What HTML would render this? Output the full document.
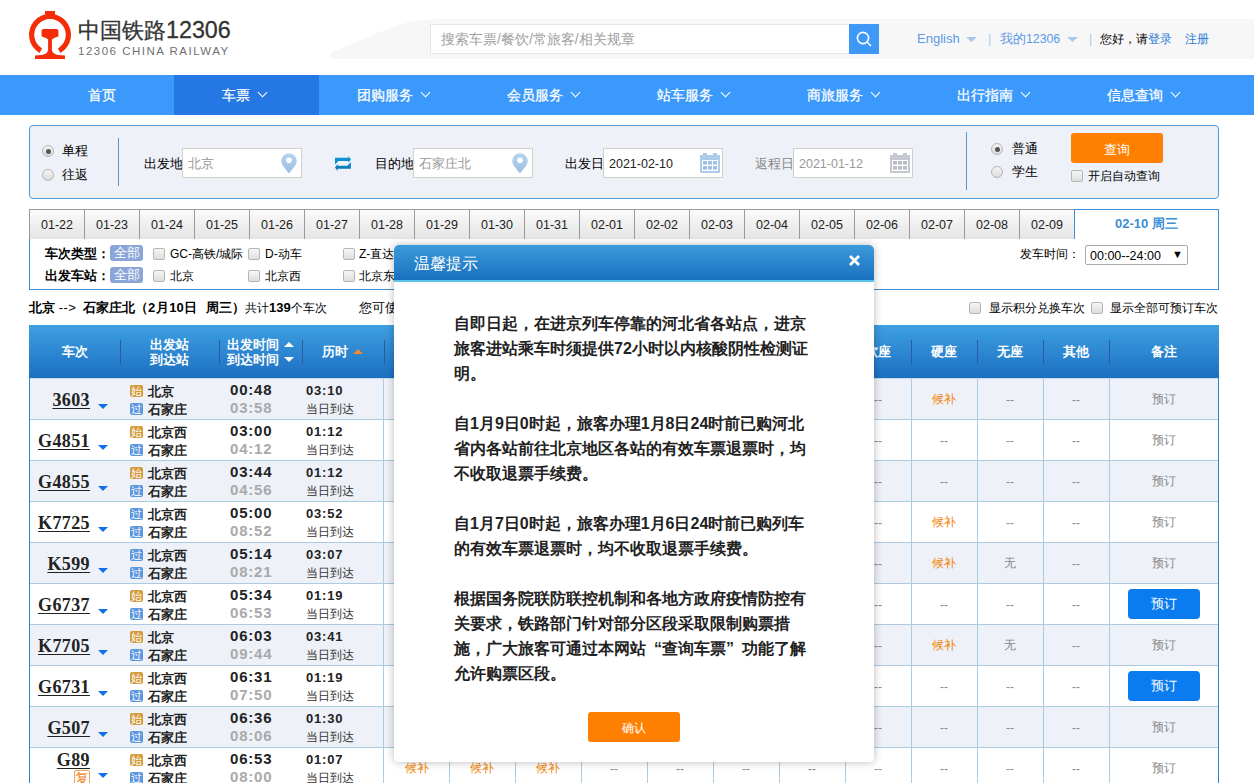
<!DOCTYPE html>
<html><head><meta charset="utf-8">
<style>
*{margin:0;padding:0;box-sizing:border-box}
html,body{width:1254px;height:783px;overflow:hidden;background:#fff}
body{font-family:"Liberation Sans",sans-serif;font-size:12px;color:#333;position:relative}
.a{position:absolute;white-space:nowrap}
/* header */
.nav{position:absolute;left:0;top:75px;width:1254px;height:40px;background:#3c99fc}
.nav .it{position:absolute;top:0;height:40px;line-height:40px;color:#fff;font-size:14px;text-align:center;-webkit-text-stroke:0.25px #fff}
.nav .act{background:#2577e3}
.chev{display:inline-block;width:7px;height:7px;border-right:1.6px solid #fff;border-bottom:1.6px solid #fff;transform:rotate(45deg);margin-left:9px;position:relative;top:-4px}
.inp{position:absolute;background:#fff;border:1px solid #d3d0c9;height:30px;top:148px}
.lbl{position:absolute;top:156px;font-size:13px;color:#000;line-height:16px}
.radio{position:absolute;width:12px;height:12px;border-radius:50%;border:1px solid #b5b5b5;background:linear-gradient(#f4f4f4,#dcdcdc)}
.radio.on::after{content:"";position:absolute;left:2.5px;top:2.5px;width:5px;height:5px;border-radius:50%;background:#555}
.cb{position:absolute;width:12px;height:12px;border-radius:2px;border:1px solid #b5b5b5;background:linear-gradient(#f6f6f6,#dedede)}
.tab{position:absolute;top:209px;width:56px;height:30px;border:1px solid #9a9a9a;border-bottom:none;background:linear-gradient(#fbfbfb,#e4e4e4);font-size:12.5px;color:#222;text-align:center;line-height:31px}
.flt{position:absolute;font-size:12px;line-height:16px;color:#000;white-space:nowrap}
.badge{position:absolute;width:33px;height:16px;border-radius:3px;background:#8aa5d8;color:#fff;font-size:13px;line-height:16px;text-align:center}
.thead{background:linear-gradient(#3ea0e1,#1c6fc1)}
.hsep{top:340px;width:1px;height:24px;background:#2d5a9e}
.th{color:#fff;font-weight:bold;font-size:13px;line-height:16px;text-align:center}
.vsep{width:1px;height:41px;background:#accbe1}
.tn{font-family:"Liberation Serif",serif;font-weight:bold;font-size:18px;line-height:22px;color:#222;text-decoration:underline;text-underline-offset:2px;letter-spacing:0.4px}
.tri{width:0;height:0;border-left:5px solid transparent;border-right:5px solid transparent;border-top:5px solid #1270e6}
.ico{width:13px;height:12px;border-radius:2px;color:#fff;font-size:11px;line-height:12px;text-align:center}
.ico.s{background:#d39a3e}.ico.g{background:#5b96e0}
.stn{font-size:13px;font-weight:bold;color:#222;line-height:16px}
.tm{font-size:15px;font-weight:bold;color:#222;line-height:18px;letter-spacing:0.8px}
.du{font-size:13px;font-weight:bold;color:#222;line-height:16px;letter-spacing:0.8px}
.dd{font-size:12px;color:#333;line-height:16px}
.seat{font-size:12px;line-height:16px;text-align:center}
.btnb{width:72px;height:30px;border-radius:4px;background:#0b7cf0;color:#fff;font-size:13px;line-height:30px;text-align:center}
.modal{position:absolute;left:394px;top:245px;width:480px;height:517px;background:#fff;border-radius:5px 5px 4px 4px;box-shadow:0 0 8px rgba(0,0,0,0.28)}
.mh{position:absolute;left:0;top:0;width:480px;height:37px;border-radius:5px 5px 0 0;background:linear-gradient(#3b9bda,#1a70bf);border-bottom:2px solid #5cc3ec}
.mt{position:absolute;left:60px;top:66px;font-size:16px;font-weight:bold;line-height:25px;color:#222;white-space:nowrap}
</style></head><body>

<!-- HEADER -->
<svg class="a" style="left:0;top:0" width="1254" height="75">
  <path d="M1254 19 L440 19 Q410 19 385 30 L334 51 Q326 56 333 59 L1254 59 Z" fill="#f7f7f7"/>
  <!-- logo -->
  <g fill="#f42c08">
    <path d="M39.5 52.99 A21 21 0 1 1 60.5 52.99 L57.9 48.48 A15.8 15.8 0 1 0 42.1 48.48 Z"/>
    <rect x="45" y="11" width="10" height="5"/>
    <path d="M43.5 29 H56.5 Q58.4 29 58.4 31 V36.5 Q54 37.5 51.9 39.5 V50 Q52.5 54 58 55 L65 55.6 V59 H35 V55.6 L42 55 Q47.5 54 48.1 50 V39.5 Q46 37.5 41.6 36.5 V31 Q41.6 29 43.5 29 Z"/>
  </g>
</svg>
<div class="a" style="left:78px;top:16px;font-size:21.5px;color:#333;line-height:28px;-webkit-text-stroke:0.3px #333">中国铁路<span style="font-size:23.3px">12306</span></div>
<div class="a" style="left:78px;top:44px;font-size:11.5px;color:#707070;letter-spacing:1.5px;line-height:14px">12306 CHINA RAILWAY</div>

<div class="a" style="left:430px;top:24px;width:420px;height:30px;background:#fff;border:1px solid #e6e6e6"></div>
<div class="a" style="left:441px;top:30px;font-size:14px;color:#a0a0a0;line-height:18px">搜索车票/餐饮/常旅客/相关规章</div>
<div class="a" style="left:849px;top:24px;width:30px;height:30px;background:#3d98f7"></div>
<svg class="a" style="left:849px;top:24px" width="30" height="30"><circle cx="14" cy="14" r="5.6" fill="none" stroke="#fff" stroke-width="1.6"/><line x1="18" y1="18" x2="22" y2="22" stroke="#fff" stroke-width="1.6"/></svg>

<div class="a" style="left:917px;top:31px;font-size:13px;color:#5a9ae6;line-height:16px">English</div>
<div class="a" style="left:988px;top:31px;font-size:12px;color:#a8c8ee;line-height:16px">|</div>
<div class="a" style="left:1000px;top:31px;font-size:12.5px;color:#5a9ae6;line-height:16px">我的<span style="font-size:12.3px">12306</span></div>
<div class="a" style="left:1089px;top:31px;font-size:12px;color:#a8c8ee;line-height:16px">|</div>
<div class="a" style="left:1100px;top:31px;font-size:12px;color:#000;line-height:16px">您好，请<span style="color:#2a7bd6">登录</span></div>
<div class="a" style="left:1185px;top:31px;font-size:12px;color:#2a7bd6;line-height:16px">注册</div>
<svg class="a" style="left:0;top:0" width="1254" height="75"><path d="M966 37 h11 l-5.5 5z M1067 37 h11 l-5.5 5z" fill="#a8c8ee"/></svg>

<!-- NAV -->
<div class="nav">
  <div class="it" style="left:29px;width:145px">首页</div>
  <div class="it act" style="left:174px;width:145px;text-indent:-5px">车票<i class="chev"></i></div>
  <div class="it" style="left:319px;width:150px;text-indent:-3px">团购服务<i class="chev"></i></div>
  <div class="it" style="left:469px;width:150px;text-indent:-3px">会员服务<i class="chev"></i></div>
  <div class="it" style="left:619px;width:150px;text-indent:-3px">站车服务<i class="chev"></i></div>
  <div class="it" style="left:769px;width:150px;text-indent:-3px">商旅服务<i class="chev"></i></div>
  <div class="it" style="left:919px;width:150px;text-indent:-3px">出行指南<i class="chev"></i></div>
  <div class="it" style="left:1069px;width:150px;text-indent:-3px">信息查询<i class="chev"></i></div>
</div>

<!-- SEARCH FORM -->
<div class="a" style="left:29px;top:125px;width:1190px;height:74px;border:1px solid #4e9bd8;border-radius:4px;background:#eef1f8"></div>
<div class="radio on" style="left:42px;top:145px"></div>
<div class="radio" style="left:42px;top:169px"></div>
<div class="lbl" style="left:62px;top:143px">单程</div>
<div class="lbl" style="left:62px;top:167px">往返</div>
<div class="a" style="left:118px;top:138px;width:1px;height:48px;background:#4e9bd8"></div>

<div class="lbl" style="left:144px;font-size:12.5px">出发地</div>
<div class="inp" style="left:182px;width:120px"></div>
<div class="lbl" style="left:188px;color:#999">北京</div>
<div class="lbl" style="left:375px;font-size:12.5px">目的地</div>
<div class="inp" style="left:413px;width:120px"></div>
<div class="lbl" style="left:419px;color:#999">石家庄北</div>
<div class="lbl" style="left:565px;font-size:12.5px">出发日</div>
<div class="inp" style="left:603px;width:120px"></div>
<div class="lbl" style="left:609px;color:#222;font-size:12.5px">2021-02-10</div>
<div class="lbl" style="left:755px;color:#888;font-size:12.5px">返程日</div>
<div class="inp" style="left:793px;width:120px"></div>
<div class="lbl" style="left:799px;color:#999;font-size:12.5px">2021-01-12</div>

<svg class="a" style="left:281px;top:153px" width="16" height="21" viewBox="0 0 16 21">
<defs><linearGradient id="pg281" x1="0" y1="0" x2="0" y2="1"><stop offset="0" stop-color="#b7d5f0"/><stop offset="1" stop-color="#9bbde2"/></linearGradient></defs>
<path d="M8 20.5 C5 16 0.3 12.5 0.3 7.9 A7.7 7.7 0 0 1 15.7 7.9 C15.7 12.5 11 16 8 20.5 Z" fill="url(#pg281)"/><circle cx="8" cy="7.3" r="2.8" fill="#fff"/></svg><svg class="a" style="left:512px;top:153px" width="16" height="21" viewBox="0 0 16 21">
<defs><linearGradient id="pg512" x1="0" y1="0" x2="0" y2="1"><stop offset="0" stop-color="#b7d5f0"/><stop offset="1" stop-color="#9bbde2"/></linearGradient></defs>
<path d="M8 20.5 C5 16 0.3 12.5 0.3 7.9 A7.7 7.7 0 0 1 15.7 7.9 C15.7 12.5 11 16 8 20.5 Z" fill="url(#pg512)"/><circle cx="8" cy="7.3" r="2.8" fill="#fff"/></svg><svg class="a" style="left:700px;top:153px" width="20" height="20" viewBox="0 0 20 20">
<rect x="3" y="0" width="4" height="3" fill="#abcdeb"/><rect x="13" y="0" width="4" height="3" fill="#abcdeb"/>
<rect x="0" y="2" width="20" height="18" fill="#abcdeb"/><rect x="2" y="7" width="16" height="11" fill="#fff"/>
<g fill="#9ec0e2"><rect x="3" y="8" width="4" height="3.6"/><rect x="8" y="8" width="4" height="3.6"/><rect x="13" y="8" width="4" height="3.6"/>
<rect x="3" y="13" width="4" height="3.6"/><rect x="8" y="13" width="4" height="3.6"/><rect x="13" y="13" width="4" height="3.6"/></g></svg><svg class="a" style="left:890px;top:153px" width="20" height="20" viewBox="0 0 20 20">
<rect x="3" y="0" width="4" height="3" fill="#c4c8d0"/><rect x="13" y="0" width="4" height="3" fill="#c4c8d0"/>
<rect x="0" y="2" width="20" height="18" fill="#c4c8d0"/><rect x="2" y="7" width="16" height="11" fill="#fff"/>
<g fill="#b9bdc6"><rect x="3" y="8" width="4" height="3.6"/><rect x="8" y="8" width="4" height="3.6"/><rect x="13" y="8" width="4" height="3.6"/>
<rect x="3" y="13" width="4" height="3.6"/><rect x="8" y="13" width="4" height="3.6"/><rect x="13" y="13" width="4" height="3.6"/></g></svg>
<svg class="a" style="left:328px;top:150px" width="30" height="28" viewBox="0 0 30 28">
<defs><linearGradient id="sw" x1="0" y1="0" x2="0" y2="1"><stop offset="0" stop-color="#0e9bd9"/><stop offset="1" stop-color="#0877b0"/></linearGradient></defs>
<path d="M7 14.4 V7.7 H20.4 V5.9 L23 9.4 L20.4 12.6 V10.9 H10.2 V11.3 Z M22.9 12.2 V18.8 H9.6 V20.9 L7 17.5 L9.6 14.1 V15.7 H19.8 V15.3 Z" fill="url(#sw)"/></svg>
<div class="a" style="left:966px;top:132px;width:1px;height:58px;background:#4e9bd8"></div>
<div class="radio on" style="left:991px;top:143px"></div>
<div class="radio" style="left:991px;top:166px"></div>
<div class="lbl" style="left:1012px;top:141px">普通</div>
<div class="lbl" style="left:1012px;top:164px">学生</div>
<div class="a" style="left:1071px;top:133px;width:92px;height:30px;background:#ff8000;border-radius:3px;color:#fff;font-size:12.5px;text-align:center;line-height:34px">查询</div>
<div class="cb" style="left:1071px;top:170px"></div>
<div class="lbl" style="left:1088px;top:168px;font-size:12px">开启自动查询</div>

<!-- DATE TABS -->
<div class="a" style="left:29px;top:238px;width:1190px;height:52px;border:1px solid #3d90d7;background:#fff"></div>
<div class="tab" style="left:29px">01-22</div><div class="tab" style="left:84px">01-23</div><div class="tab" style="left:139px">01-24</div><div class="tab" style="left:194px">01-25</div><div class="tab" style="left:249px">01-26</div><div class="tab" style="left:304px">01-27</div><div class="tab" style="left:359px">01-28</div><div class="tab" style="left:414px">01-29</div><div class="tab" style="left:469px">01-30</div><div class="tab" style="left:524px">01-31</div><div class="tab" style="left:579px">02-01</div><div class="tab" style="left:634px">02-02</div><div class="tab" style="left:689px">02-03</div><div class="tab" style="left:744px">02-04</div><div class="tab" style="left:799px">02-05</div><div class="tab" style="left:854px">02-06</div><div class="tab" style="left:909px">02-07</div><div class="tab" style="left:964px">02-08</div><div class="tab" style="left:1019px">02-09</div>
<div class="a" style="left:1074px;top:209px;width:145px;height:30px;border:1px solid #3d90d7;border-bottom:none;background:#fff;color:#3a8fd6;font-weight:bold;font-size:13px;text-align:center;line-height:28px">02-10 周三</div>

<!-- FILTERS -->
<div class="flt" style="left:45px;top:246px;font-weight:bold;font-size:12.5px">车次类型：</div>
<div class="badge" style="left:110px;top:245px">全部</div>
<div class="cb" style="left:153px;top:248px"></div><div class="flt" style="left:170px;top:246px">GC-高铁/城际</div>
<div class="cb" style="left:248px;top:248px"></div><div class="flt" style="left:265px;top:246px">D-动车</div>
<div class="cb" style="left:343px;top:248px"></div><div class="flt" style="left:359px;top:246px">Z-直达</div>
<div class="flt" style="left:45px;top:268px;font-weight:bold;font-size:12.5px">出发车站：</div>
<div class="badge" style="left:110px;top:267px">全部</div>
<div class="cb" style="left:153px;top:270px"></div><div class="flt" style="left:170px;top:268px">北京</div>
<div class="cb" style="left:248px;top:270px"></div><div class="flt" style="left:265px;top:268px">北京西</div>
<div class="cb" style="left:343px;top:270px"></div><div class="flt" style="left:359px;top:268px">北京东</div>
<div class="flt" style="left:1020px;top:246px">发车时间：</div>
<div class="a" style="left:1085px;top:245px;width:103px;height:20px;border:1px solid #a9a9a9;border-radius:2px;background:#fff"></div>
<div class="flt" style="left:1090px;top:248px;font-size:12.5px">00:00--24:00</div>
<div class="flt" style="left:1172px;top:246px;font-size:11px">▼</div>

<!-- RESULT HEADER -->
<div class="a" style="left:29px;top:300px;font-size:13px;line-height:16px;color:#000;font-weight:bold">北京 <span style="font-weight:normal;letter-spacing:0.5px">--&gt;</span></div>
<div class="a" style="left:83px;top:300px;font-size:13px;line-height:16px;color:#000;font-weight:bold">石家庄北（2<span style="margin-left:1px">月</span>10日</div>
<div class="a" style="left:206px;top:300px;font-size:13px;line-height:16px;color:#000;font-weight:bold">周三）</div>
<div class="a" style="left:245px;top:300px;font-size:12px;line-height:16px;color:#000">共计<b style="font-size:13px">139</b>个车次</div>
<div class="a" style="left:359px;top:300px;font-size:13px;line-height:16px;color:#000">您可使用接续换乘功能，查询途中换乘一次的列车</div>
<div class="cb" style="left:969px;top:302px"></div><div class="a" style="left:989px;top:300px;font-size:12px;line-height:16px;color:#000">显示积分兑换车次</div>
<div class="cb" style="left:1091px;top:302px"></div><div class="a" style="left:1110px;top:300px;font-size:12px;line-height:16px;color:#000">显示全部可预订车次</div>

<!-- TABLE -->
<div class="a thead" style="left:29px;top:325px;width:1190px;height:53px"></div>
<div class="a th" style="left:29px;width:91px;top:344px">车次</div>
<div class="a hsep" style="left:120px"></div>
<div class="a th" style="left:120px;width:99px;top:337px;line-height:15px">出发站<br>到达站</div>
<div class="a hsep" style="left:219px"></div>
<div class="a th" style="left:227px;top:337px;line-height:15px;text-align:left">出发时间<br>到达时间</div>
<div class="a" style="left:284px;top:342px;width:0;height:0;border-left:5px solid transparent;border-right:5px solid transparent;border-bottom:5px solid #fff"></div>
<div class="a" style="left:284px;top:357px;width:0;height:0;border-left:5px solid transparent;border-right:5px solid transparent;border-top:5px solid #fff"></div>
<div class="a hsep" style="left:302px"></div>
<div class="a th" style="left:322px;top:344px;text-align:left">历时</div>
<div class="a" style="left:353px;top:349px;width:0;height:0;border-left:5px solid transparent;border-right:5px solid transparent;border-bottom:5px solid #f28a2e"></div>
<div class="a hsep" style="left:384px"></div>
<div class="a th" style="left:384px;width:65px;top:337px;line-height:15px">商务座<br>特等座</div>
<div class="a hsep" style="left:449px"></div>
<div class="a th" style="left:449px;width:66px;top:344px">一等座</div>
<div class="a hsep" style="left:515px"></div>
<div class="a th" style="left:515px;width:66px;top:337px;line-height:15px">二等座<br>二等包座</div>
<div class="a hsep" style="left:581px"></div>
<div class="a th" style="left:581px;width:66px;top:337px;line-height:15px">高级<br>软卧</div>
<div class="a hsep" style="left:647px"></div>
<div class="a th" style="left:647px;width:66px;top:337px;line-height:15px">软卧<br>一等卧</div>
<div class="a hsep" style="left:713px"></div>
<div class="a th" style="left:713px;width:66px;top:344px">动卧</div>
<div class="a hsep" style="left:779px"></div>
<div class="a th" style="left:779px;width:66px;top:337px;line-height:15px">硬卧<br>二等卧</div>
<div class="a hsep" style="left:845px"></div>
<div class="a th" style="left:845px;width:66px;top:344px">软座</div>
<div class="a hsep" style="left:911px"></div>
<div class="a th" style="left:911px;width:66px;top:344px">硬座</div>
<div class="a hsep" style="left:977px"></div>
<div class="a th" style="left:977px;width:66px;top:344px">无座</div>
<div class="a hsep" style="left:1043px"></div>
<div class="a th" style="left:1043px;width:66px;top:344px">其他</div>
<div class="a hsep" style="left:1109px"></div>
<div class="a th" style="left:1109px;width:110px;top:344px">备注</div>
<div class="a" style="left:29px;top:378px;width:1190px;height:42px;background:#eef1f8;border-top:1px solid #accbe1"></div>
<div class="a vsep" style="left:383px;top:378px"></div>
<div class="a vsep" style="left:449px;top:378px"></div>
<div class="a vsep" style="left:515px;top:378px"></div>
<div class="a vsep" style="left:581px;top:378px"></div>
<div class="a vsep" style="left:647px;top:378px"></div>
<div class="a vsep" style="left:713px;top:378px"></div>
<div class="a vsep" style="left:779px;top:378px"></div>
<div class="a vsep" style="left:845px;top:378px"></div>
<div class="a vsep" style="left:911px;top:378px"></div>
<div class="a vsep" style="left:977px;top:378px"></div>
<div class="a vsep" style="left:1043px;top:378px"></div>
<div class="a vsep" style="left:1109px;top:378px"></div>
<div class="a tn" style="right:1164px;top:389px">3603</div>
<div class="a tri" style="left:98px;top:404px"></div>
<div class="a ico s" style="left:130px;top:385px">始</div>
<div class="a ico g" style="left:130px;top:403px">过</div>
<div class="a stn" style="left:148px;top:384px">北京</div>
<div class="a stn" style="left:148px;top:402px">石家庄</div>
<div class="a tm" style="left:230px;top:381px">00:48</div>
<div class="a tm" style="left:230px;top:399px;color:#a9a9a9">03:58</div>
<div class="a du" style="left:306px;top:383px">03:10</div>
<div class="a dd" style="left:306px;top:401px">当日到达</div>
<div class="a seat" style="left:384px;width:65px;top:392px;color:#888">--</div>
<div class="a seat" style="left:449px;width:66px;top:392px;color:#888">--</div>
<div class="a seat" style="left:515px;width:66px;top:392px;color:#888">--</div>
<div class="a seat" style="left:581px;width:66px;top:392px;color:#888">--</div>
<div class="a seat" style="left:647px;width:66px;top:392px;color:#888">--</div>
<div class="a seat" style="left:713px;width:66px;top:392px;color:#888">--</div>
<div class="a seat" style="left:779px;width:66px;top:392px;color:#888">--</div>
<div class="a seat" style="left:845px;width:66px;top:392px;color:#888">--</div>
<div class="a seat" style="left:911px;width:66px;top:391px;color:#f08200">候补</div>
<div class="a seat" style="left:977px;width:66px;top:392px;color:#888">--</div>
<div class="a seat" style="left:1043px;width:66px;top:392px;color:#888">--</div>
<div class="a seat" style="left:1109px;width:110px;top:391px;color:#888">预订</div>
<div class="a" style="left:29px;top:419px;width:1190px;height:42px;background:#fff;border-top:1px solid #accbe1"></div>
<div class="a vsep" style="left:383px;top:419px"></div>
<div class="a vsep" style="left:449px;top:419px"></div>
<div class="a vsep" style="left:515px;top:419px"></div>
<div class="a vsep" style="left:581px;top:419px"></div>
<div class="a vsep" style="left:647px;top:419px"></div>
<div class="a vsep" style="left:713px;top:419px"></div>
<div class="a vsep" style="left:779px;top:419px"></div>
<div class="a vsep" style="left:845px;top:419px"></div>
<div class="a vsep" style="left:911px;top:419px"></div>
<div class="a vsep" style="left:977px;top:419px"></div>
<div class="a vsep" style="left:1043px;top:419px"></div>
<div class="a vsep" style="left:1109px;top:419px"></div>
<div class="a tn" style="right:1164px;top:430px">G4851</div>
<div class="a tri" style="left:98px;top:445px"></div>
<div class="a ico s" style="left:130px;top:426px">始</div>
<div class="a ico g" style="left:130px;top:444px">过</div>
<div class="a stn" style="left:148px;top:425px">北京西</div>
<div class="a stn" style="left:148px;top:443px">石家庄</div>
<div class="a tm" style="left:230px;top:422px">03:00</div>
<div class="a tm" style="left:230px;top:440px;color:#a9a9a9">04:12</div>
<div class="a du" style="left:306px;top:424px">01:12</div>
<div class="a dd" style="left:306px;top:442px">当日到达</div>
<div class="a seat" style="left:384px;width:65px;top:433px;color:#888">--</div>
<div class="a seat" style="left:449px;width:66px;top:433px;color:#888">--</div>
<div class="a seat" style="left:515px;width:66px;top:433px;color:#888">--</div>
<div class="a seat" style="left:581px;width:66px;top:433px;color:#888">--</div>
<div class="a seat" style="left:647px;width:66px;top:433px;color:#888">--</div>
<div class="a seat" style="left:713px;width:66px;top:433px;color:#888">--</div>
<div class="a seat" style="left:779px;width:66px;top:433px;color:#888">--</div>
<div class="a seat" style="left:845px;width:66px;top:433px;color:#888">--</div>
<div class="a seat" style="left:911px;width:66px;top:433px;color:#888">--</div>
<div class="a seat" style="left:977px;width:66px;top:433px;color:#888">--</div>
<div class="a seat" style="left:1043px;width:66px;top:433px;color:#888">--</div>
<div class="a seat" style="left:1109px;width:110px;top:432px;color:#888">预订</div>
<div class="a" style="left:29px;top:460px;width:1190px;height:42px;background:#eef1f8;border-top:1px solid #accbe1"></div>
<div class="a vsep" style="left:383px;top:460px"></div>
<div class="a vsep" style="left:449px;top:460px"></div>
<div class="a vsep" style="left:515px;top:460px"></div>
<div class="a vsep" style="left:581px;top:460px"></div>
<div class="a vsep" style="left:647px;top:460px"></div>
<div class="a vsep" style="left:713px;top:460px"></div>
<div class="a vsep" style="left:779px;top:460px"></div>
<div class="a vsep" style="left:845px;top:460px"></div>
<div class="a vsep" style="left:911px;top:460px"></div>
<div class="a vsep" style="left:977px;top:460px"></div>
<div class="a vsep" style="left:1043px;top:460px"></div>
<div class="a vsep" style="left:1109px;top:460px"></div>
<div class="a tn" style="right:1164px;top:471px">G4855</div>
<div class="a tri" style="left:98px;top:486px"></div>
<div class="a ico s" style="left:130px;top:467px">始</div>
<div class="a ico g" style="left:130px;top:485px">过</div>
<div class="a stn" style="left:148px;top:466px">北京西</div>
<div class="a stn" style="left:148px;top:484px">石家庄</div>
<div class="a tm" style="left:230px;top:463px">03:44</div>
<div class="a tm" style="left:230px;top:481px;color:#a9a9a9">04:56</div>
<div class="a du" style="left:306px;top:465px">01:12</div>
<div class="a dd" style="left:306px;top:483px">当日到达</div>
<div class="a seat" style="left:384px;width:65px;top:474px;color:#888">--</div>
<div class="a seat" style="left:449px;width:66px;top:474px;color:#888">--</div>
<div class="a seat" style="left:515px;width:66px;top:474px;color:#888">--</div>
<div class="a seat" style="left:581px;width:66px;top:474px;color:#888">--</div>
<div class="a seat" style="left:647px;width:66px;top:474px;color:#888">--</div>
<div class="a seat" style="left:713px;width:66px;top:474px;color:#888">--</div>
<div class="a seat" style="left:779px;width:66px;top:474px;color:#888">--</div>
<div class="a seat" style="left:845px;width:66px;top:474px;color:#888">--</div>
<div class="a seat" style="left:911px;width:66px;top:474px;color:#888">--</div>
<div class="a seat" style="left:977px;width:66px;top:474px;color:#888">--</div>
<div class="a seat" style="left:1043px;width:66px;top:474px;color:#888">--</div>
<div class="a seat" style="left:1109px;width:110px;top:473px;color:#888">预订</div>
<div class="a" style="left:29px;top:501px;width:1190px;height:42px;background:#fff;border-top:1px solid #accbe1"></div>
<div class="a vsep" style="left:383px;top:501px"></div>
<div class="a vsep" style="left:449px;top:501px"></div>
<div class="a vsep" style="left:515px;top:501px"></div>
<div class="a vsep" style="left:581px;top:501px"></div>
<div class="a vsep" style="left:647px;top:501px"></div>
<div class="a vsep" style="left:713px;top:501px"></div>
<div class="a vsep" style="left:779px;top:501px"></div>
<div class="a vsep" style="left:845px;top:501px"></div>
<div class="a vsep" style="left:911px;top:501px"></div>
<div class="a vsep" style="left:977px;top:501px"></div>
<div class="a vsep" style="left:1043px;top:501px"></div>
<div class="a vsep" style="left:1109px;top:501px"></div>
<div class="a tn" style="right:1164px;top:512px">K7725</div>
<div class="a tri" style="left:98px;top:527px"></div>
<div class="a ico g" style="left:130px;top:508px">过</div>
<div class="a ico g" style="left:130px;top:526px">过</div>
<div class="a stn" style="left:148px;top:507px">北京西</div>
<div class="a stn" style="left:148px;top:525px">石家庄</div>
<div class="a tm" style="left:230px;top:504px">05:00</div>
<div class="a tm" style="left:230px;top:522px;color:#a9a9a9">08:52</div>
<div class="a du" style="left:306px;top:506px">03:52</div>
<div class="a dd" style="left:306px;top:524px">当日到达</div>
<div class="a seat" style="left:384px;width:65px;top:515px;color:#888">--</div>
<div class="a seat" style="left:449px;width:66px;top:515px;color:#888">--</div>
<div class="a seat" style="left:515px;width:66px;top:515px;color:#888">--</div>
<div class="a seat" style="left:581px;width:66px;top:515px;color:#888">--</div>
<div class="a seat" style="left:647px;width:66px;top:515px;color:#888">--</div>
<div class="a seat" style="left:713px;width:66px;top:515px;color:#888">--</div>
<div class="a seat" style="left:779px;width:66px;top:515px;color:#888">--</div>
<div class="a seat" style="left:845px;width:66px;top:515px;color:#888">--</div>
<div class="a seat" style="left:911px;width:66px;top:514px;color:#f08200">候补</div>
<div class="a seat" style="left:977px;width:66px;top:515px;color:#888">--</div>
<div class="a seat" style="left:1043px;width:66px;top:515px;color:#888">--</div>
<div class="a seat" style="left:1109px;width:110px;top:514px;color:#888">预订</div>
<div class="a" style="left:29px;top:542px;width:1190px;height:42px;background:#eef1f8;border-top:1px solid #accbe1"></div>
<div class="a vsep" style="left:383px;top:542px"></div>
<div class="a vsep" style="left:449px;top:542px"></div>
<div class="a vsep" style="left:515px;top:542px"></div>
<div class="a vsep" style="left:581px;top:542px"></div>
<div class="a vsep" style="left:647px;top:542px"></div>
<div class="a vsep" style="left:713px;top:542px"></div>
<div class="a vsep" style="left:779px;top:542px"></div>
<div class="a vsep" style="left:845px;top:542px"></div>
<div class="a vsep" style="left:911px;top:542px"></div>
<div class="a vsep" style="left:977px;top:542px"></div>
<div class="a vsep" style="left:1043px;top:542px"></div>
<div class="a vsep" style="left:1109px;top:542px"></div>
<div class="a tn" style="right:1164px;top:553px">K599</div>
<div class="a tri" style="left:98px;top:568px"></div>
<div class="a ico g" style="left:130px;top:549px">过</div>
<div class="a ico g" style="left:130px;top:567px">过</div>
<div class="a stn" style="left:148px;top:548px">北京西</div>
<div class="a stn" style="left:148px;top:566px">石家庄</div>
<div class="a tm" style="left:230px;top:545px">05:14</div>
<div class="a tm" style="left:230px;top:563px;color:#a9a9a9">08:21</div>
<div class="a du" style="left:306px;top:547px">03:07</div>
<div class="a dd" style="left:306px;top:565px">当日到达</div>
<div class="a seat" style="left:384px;width:65px;top:556px;color:#888">--</div>
<div class="a seat" style="left:449px;width:66px;top:556px;color:#888">--</div>
<div class="a seat" style="left:515px;width:66px;top:556px;color:#888">--</div>
<div class="a seat" style="left:581px;width:66px;top:556px;color:#888">--</div>
<div class="a seat" style="left:647px;width:66px;top:556px;color:#888">--</div>
<div class="a seat" style="left:713px;width:66px;top:556px;color:#888">--</div>
<div class="a seat" style="left:779px;width:66px;top:556px;color:#888">--</div>
<div class="a seat" style="left:845px;width:66px;top:556px;color:#888">--</div>
<div class="a seat" style="left:911px;width:66px;top:555px;color:#f08200">候补</div>
<div class="a seat" style="left:977px;width:66px;top:555px;color:#888">无</div>
<div class="a seat" style="left:1043px;width:66px;top:556px;color:#888">--</div>
<div class="a seat" style="left:1109px;width:110px;top:555px;color:#888">预订</div>
<div class="a" style="left:29px;top:583px;width:1190px;height:42px;background:#fff;border-top:1px solid #accbe1"></div>
<div class="a vsep" style="left:383px;top:583px"></div>
<div class="a vsep" style="left:449px;top:583px"></div>
<div class="a vsep" style="left:515px;top:583px"></div>
<div class="a vsep" style="left:581px;top:583px"></div>
<div class="a vsep" style="left:647px;top:583px"></div>
<div class="a vsep" style="left:713px;top:583px"></div>
<div class="a vsep" style="left:779px;top:583px"></div>
<div class="a vsep" style="left:845px;top:583px"></div>
<div class="a vsep" style="left:911px;top:583px"></div>
<div class="a vsep" style="left:977px;top:583px"></div>
<div class="a vsep" style="left:1043px;top:583px"></div>
<div class="a vsep" style="left:1109px;top:583px"></div>
<div class="a tn" style="right:1164px;top:594px">G6737</div>
<div class="a tri" style="left:98px;top:609px"></div>
<div class="a ico s" style="left:130px;top:590px">始</div>
<div class="a ico g" style="left:130px;top:608px">过</div>
<div class="a stn" style="left:148px;top:589px">北京西</div>
<div class="a stn" style="left:148px;top:607px">石家庄</div>
<div class="a tm" style="left:230px;top:586px">05:34</div>
<div class="a tm" style="left:230px;top:604px;color:#a9a9a9">06:53</div>
<div class="a du" style="left:306px;top:588px">01:19</div>
<div class="a dd" style="left:306px;top:606px">当日到达</div>
<div class="a seat" style="left:384px;width:65px;top:597px;color:#888">--</div>
<div class="a seat" style="left:449px;width:66px;top:597px;color:#888">--</div>
<div class="a seat" style="left:515px;width:66px;top:597px;color:#888">--</div>
<div class="a seat" style="left:581px;width:66px;top:597px;color:#888">--</div>
<div class="a seat" style="left:647px;width:66px;top:597px;color:#888">--</div>
<div class="a seat" style="left:713px;width:66px;top:597px;color:#888">--</div>
<div class="a seat" style="left:779px;width:66px;top:597px;color:#888">--</div>
<div class="a seat" style="left:845px;width:66px;top:597px;color:#888">--</div>
<div class="a seat" style="left:911px;width:66px;top:597px;color:#888">--</div>
<div class="a seat" style="left:977px;width:66px;top:597px;color:#888">--</div>
<div class="a seat" style="left:1043px;width:66px;top:597px;color:#888">--</div>
<div class="a btnb" style="left:1128px;top:589px">预订</div>
<div class="a" style="left:29px;top:624px;width:1190px;height:42px;background:#eef1f8;border-top:1px solid #accbe1"></div>
<div class="a vsep" style="left:383px;top:624px"></div>
<div class="a vsep" style="left:449px;top:624px"></div>
<div class="a vsep" style="left:515px;top:624px"></div>
<div class="a vsep" style="left:581px;top:624px"></div>
<div class="a vsep" style="left:647px;top:624px"></div>
<div class="a vsep" style="left:713px;top:624px"></div>
<div class="a vsep" style="left:779px;top:624px"></div>
<div class="a vsep" style="left:845px;top:624px"></div>
<div class="a vsep" style="left:911px;top:624px"></div>
<div class="a vsep" style="left:977px;top:624px"></div>
<div class="a vsep" style="left:1043px;top:624px"></div>
<div class="a vsep" style="left:1109px;top:624px"></div>
<div class="a tn" style="right:1164px;top:635px">K7705</div>
<div class="a tri" style="left:98px;top:650px"></div>
<div class="a ico s" style="left:130px;top:631px">始</div>
<div class="a ico g" style="left:130px;top:649px">过</div>
<div class="a stn" style="left:148px;top:630px">北京</div>
<div class="a stn" style="left:148px;top:648px">石家庄</div>
<div class="a tm" style="left:230px;top:627px">06:03</div>
<div class="a tm" style="left:230px;top:645px;color:#a9a9a9">09:44</div>
<div class="a du" style="left:306px;top:629px">03:41</div>
<div class="a dd" style="left:306px;top:647px">当日到达</div>
<div class="a seat" style="left:384px;width:65px;top:638px;color:#888">--</div>
<div class="a seat" style="left:449px;width:66px;top:638px;color:#888">--</div>
<div class="a seat" style="left:515px;width:66px;top:638px;color:#888">--</div>
<div class="a seat" style="left:581px;width:66px;top:638px;color:#888">--</div>
<div class="a seat" style="left:647px;width:66px;top:638px;color:#888">--</div>
<div class="a seat" style="left:713px;width:66px;top:638px;color:#888">--</div>
<div class="a seat" style="left:779px;width:66px;top:638px;color:#888">--</div>
<div class="a seat" style="left:845px;width:66px;top:638px;color:#888">--</div>
<div class="a seat" style="left:911px;width:66px;top:637px;color:#f08200">候补</div>
<div class="a seat" style="left:977px;width:66px;top:637px;color:#888">无</div>
<div class="a seat" style="left:1043px;width:66px;top:638px;color:#888">--</div>
<div class="a seat" style="left:1109px;width:110px;top:637px;color:#888">预订</div>
<div class="a" style="left:29px;top:665px;width:1190px;height:42px;background:#fff;border-top:1px solid #accbe1"></div>
<div class="a vsep" style="left:383px;top:665px"></div>
<div class="a vsep" style="left:449px;top:665px"></div>
<div class="a vsep" style="left:515px;top:665px"></div>
<div class="a vsep" style="left:581px;top:665px"></div>
<div class="a vsep" style="left:647px;top:665px"></div>
<div class="a vsep" style="left:713px;top:665px"></div>
<div class="a vsep" style="left:779px;top:665px"></div>
<div class="a vsep" style="left:845px;top:665px"></div>
<div class="a vsep" style="left:911px;top:665px"></div>
<div class="a vsep" style="left:977px;top:665px"></div>
<div class="a vsep" style="left:1043px;top:665px"></div>
<div class="a vsep" style="left:1109px;top:665px"></div>
<div class="a tn" style="right:1164px;top:676px">G6731</div>
<div class="a tri" style="left:98px;top:691px"></div>
<div class="a ico s" style="left:130px;top:672px">始</div>
<div class="a ico g" style="left:130px;top:690px">过</div>
<div class="a stn" style="left:148px;top:671px">北京西</div>
<div class="a stn" style="left:148px;top:689px">石家庄</div>
<div class="a tm" style="left:230px;top:668px">06:31</div>
<div class="a tm" style="left:230px;top:686px;color:#a9a9a9">07:50</div>
<div class="a du" style="left:306px;top:670px">01:19</div>
<div class="a dd" style="left:306px;top:688px">当日到达</div>
<div class="a seat" style="left:384px;width:65px;top:679px;color:#888">--</div>
<div class="a seat" style="left:449px;width:66px;top:679px;color:#888">--</div>
<div class="a seat" style="left:515px;width:66px;top:679px;color:#888">--</div>
<div class="a seat" style="left:581px;width:66px;top:679px;color:#888">--</div>
<div class="a seat" style="left:647px;width:66px;top:679px;color:#888">--</div>
<div class="a seat" style="left:713px;width:66px;top:679px;color:#888">--</div>
<div class="a seat" style="left:779px;width:66px;top:679px;color:#888">--</div>
<div class="a seat" style="left:845px;width:66px;top:679px;color:#888">--</div>
<div class="a seat" style="left:911px;width:66px;top:679px;color:#888">--</div>
<div class="a seat" style="left:977px;width:66px;top:679px;color:#888">--</div>
<div class="a seat" style="left:1043px;width:66px;top:679px;color:#888">--</div>
<div class="a btnb" style="left:1128px;top:671px">预订</div>
<div class="a" style="left:29px;top:706px;width:1190px;height:42px;background:#eef1f8;border-top:1px solid #accbe1"></div>
<div class="a vsep" style="left:383px;top:706px"></div>
<div class="a vsep" style="left:449px;top:706px"></div>
<div class="a vsep" style="left:515px;top:706px"></div>
<div class="a vsep" style="left:581px;top:706px"></div>
<div class="a vsep" style="left:647px;top:706px"></div>
<div class="a vsep" style="left:713px;top:706px"></div>
<div class="a vsep" style="left:779px;top:706px"></div>
<div class="a vsep" style="left:845px;top:706px"></div>
<div class="a vsep" style="left:911px;top:706px"></div>
<div class="a vsep" style="left:977px;top:706px"></div>
<div class="a vsep" style="left:1043px;top:706px"></div>
<div class="a vsep" style="left:1109px;top:706px"></div>
<div class="a tn" style="right:1164px;top:717px">G507</div>
<div class="a tri" style="left:98px;top:732px"></div>
<div class="a ico s" style="left:130px;top:713px">始</div>
<div class="a ico g" style="left:130px;top:731px">过</div>
<div class="a stn" style="left:148px;top:712px">北京西</div>
<div class="a stn" style="left:148px;top:730px">石家庄</div>
<div class="a tm" style="left:230px;top:709px">06:36</div>
<div class="a tm" style="left:230px;top:727px;color:#a9a9a9">08:06</div>
<div class="a du" style="left:306px;top:711px">01:30</div>
<div class="a dd" style="left:306px;top:729px">当日到达</div>
<div class="a seat" style="left:384px;width:65px;top:720px;color:#888">--</div>
<div class="a seat" style="left:449px;width:66px;top:720px;color:#888">--</div>
<div class="a seat" style="left:515px;width:66px;top:720px;color:#888">--</div>
<div class="a seat" style="left:581px;width:66px;top:720px;color:#888">--</div>
<div class="a seat" style="left:647px;width:66px;top:720px;color:#888">--</div>
<div class="a seat" style="left:713px;width:66px;top:720px;color:#888">--</div>
<div class="a seat" style="left:779px;width:66px;top:720px;color:#888">--</div>
<div class="a seat" style="left:845px;width:66px;top:720px;color:#888">--</div>
<div class="a seat" style="left:911px;width:66px;top:720px;color:#888">--</div>
<div class="a seat" style="left:977px;width:66px;top:720px;color:#888">--</div>
<div class="a seat" style="left:1043px;width:66px;top:720px;color:#888">--</div>
<div class="a seat" style="left:1109px;width:110px;top:719px;color:#888">预订</div>
<div class="a" style="left:29px;top:747px;width:1190px;height:42px;background:#fff;border-top:1px solid #accbe1"></div>
<div class="a vsep" style="left:383px;top:747px"></div>
<div class="a vsep" style="left:449px;top:747px"></div>
<div class="a vsep" style="left:515px;top:747px"></div>
<div class="a vsep" style="left:581px;top:747px"></div>
<div class="a vsep" style="left:647px;top:747px"></div>
<div class="a vsep" style="left:713px;top:747px"></div>
<div class="a vsep" style="left:779px;top:747px"></div>
<div class="a vsep" style="left:845px;top:747px"></div>
<div class="a vsep" style="left:911px;top:747px"></div>
<div class="a vsep" style="left:977px;top:747px"></div>
<div class="a vsep" style="left:1043px;top:747px"></div>
<div class="a vsep" style="left:1109px;top:747px"></div>
<div class="a tn" style="right:1164px;top:748.5px">G89</div>
<div class="a" style="left:74px;top:770px;width:16px;height:16px;border:1px solid #f5a35a;border-radius:2px;background:#fff;color:#f07d10;font-size:14px;line-height:15px;text-align:center">复</div>
<div class="a tri" style="left:98px;top:773px"></div>
<div class="a ico s" style="left:130px;top:754px">始</div>
<div class="a ico g" style="left:130px;top:772px">过</div>
<div class="a stn" style="left:148px;top:753px">北京西</div>
<div class="a stn" style="left:148px;top:771px">石家庄</div>
<div class="a tm" style="left:230px;top:750px">06:53</div>
<div class="a tm" style="left:230px;top:768px;color:#a9a9a9">08:00</div>
<div class="a du" style="left:306px;top:752px">01:07</div>
<div class="a dd" style="left:306px;top:770px">当日到达</div>
<div class="a seat" style="left:384px;width:65px;top:760px;color:#f08200">候补</div>
<div class="a seat" style="left:449px;width:66px;top:760px;color:#f08200">候补</div>
<div class="a seat" style="left:515px;width:66px;top:760px;color:#f08200">候补</div>
<div class="a seat" style="left:581px;width:66px;top:761px;color:#888">--</div>
<div class="a seat" style="left:647px;width:66px;top:761px;color:#888">--</div>
<div class="a seat" style="left:713px;width:66px;top:761px;color:#888">--</div>
<div class="a seat" style="left:779px;width:66px;top:761px;color:#888">--</div>
<div class="a seat" style="left:845px;width:66px;top:761px;color:#888">--</div>
<div class="a seat" style="left:911px;width:66px;top:761px;color:#888">--</div>
<div class="a seat" style="left:977px;width:66px;top:761px;color:#888">--</div>
<div class="a seat" style="left:1043px;width:66px;top:761px;color:#888">--</div>
<div class="a seat" style="left:1109px;width:110px;top:760px;color:#888">预订</div>
<div class="a" style="left:29px;top:378px;width:1190px;height:1px;background:#c8dbe9"></div>
<div class="a" style="left:29px;top:378px;width:1px;height:405px;background:#2f86cf"></div>
<div class="a" style="left:1218px;top:378px;width:1px;height:405px;background:#2f86cf"></div>
<!-- /TABLE -->
<!-- MODAL -->
<div class="modal">
  <div class="mh"></div>
  <div class="a" style="left:20px;top:9px;font-size:16px;color:#fff;line-height:20px">温馨提示</div>
  <svg class="a" style="left:455px;top:10px" width="11" height="11"><path d="M1 1 L10 10 M10 1 L1 10" stroke="#fff" stroke-width="2.8"/></svg>
  <div class="mt">自即日起，在进京列车停靠的河北省各站点，进京<br>旅客进站乘车时须提供72小时以内核酸阴性检测证<br>明。<br><br>自1月9日0时起，旅客办理1月8日24时前已购河北<br>省内各站前往北京地区各站的有效车票退票时，均<br>不收取退票手续费。<br><br>自1月7日0时起，旅客办理1月6日24时前已购列车<br>的有效车票退票时，均不收取退票手续费。<br><br>根据国务院联防联控机制和各地方政府疫情防控有<br>关要求，铁路部门针对部分区段采取限制购票措<br>施，广大旅客可通过本网站<span style="padding-left:8px">“</span>查询车票<span style="padding-right:8px">”</span>功能了解<br>允许购票区段。</div>
  <div class="a" style="left:194px;top:467px;width:92px;height:30px;border-radius:3px;background:#ff8000;color:#fff;font-size:12px;line-height:32px;text-align:center">确认</div>
</div>

</body></html>
